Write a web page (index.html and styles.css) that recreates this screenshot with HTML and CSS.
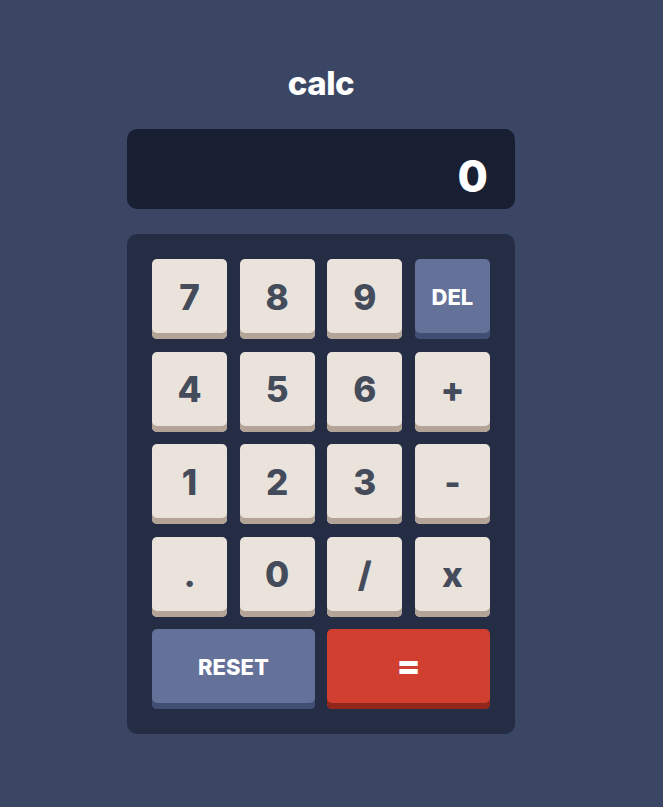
FILE: index.html
```html
<!DOCTYPE html>
<html lang="en">
<head>
<meta charset="utf-8">
<title>calc</title>
<link rel="stylesheet" href="styles.css">
</head>
<body>
<main class="calc">
  <h1 class="title">calc</h1>
  <div class="display"><span class="value">0</span></div>
  <div class="keypad">
    <button class="key">7</button>
    <button class="key">8</button>
    <button class="key">9</button>
    <button class="key key-alt key-word">DEL</button>
    <button class="key">4</button>
    <button class="key">5</button>
    <button class="key">6</button>
    <button class="key">+</button>
    <button class="key">1</button>
    <button class="key">2</button>
    <button class="key">3</button>
    <button class="key">-</button>
    <button class="key">.</button>
    <button class="key">0</button>
    <button class="key">/</button>
    <button class="key">x</button>
    <button class="key key-alt key-word key-wide">RESET</button>
    <button class="key key-eq key-word key-wide">=</button>
  </div>
</main>
</body>
</html>
```
FILE: styles.css
```css
* { box-sizing: border-box; }
html, body { margin: 0; padding: 0; }
body {
  background: #3b4664;
  font-family: "Inter", "Lato", sans-serif;
  font-weight: 800;
  min-height: 807px;
  padding-right: 21px;
}
.calc {
  width: 388px;
  margin: 0 auto;
  padding-top: 63px;
}
.title {
  margin: 0 0 26px;
  font-size: 33px;
  line-height: 40px;
  font-weight: 800;
  color: #ffffff;
  text-align: center;
  letter-spacing: -0.5px;
}
.display {
  height: 80px;
  border-radius: 10px;
  background: #181f33;
  display: flex;
  align-items: center;
  justify-content: flex-end;
  padding: 14px 27px 0 0;
  margin-bottom: 25px;
}
.value {
  color: #ffffff;
  font-size: 44px;
  line-height: 1;
  font-weight: 800;
}
.keypad {
  background: #242d44;
  border-radius: 10px;
  padding: 25px;
  display: grid;
  grid-template-columns: repeat(4, 1fr);
  grid-auto-rows: 80px;
  gap: 12.5px;
}
.key {
  border: none;
  border-radius: 5px;
  background: #eae3dc;
  box-shadow: inset 0 -6px 0 #b3a497;
  color: #444b5a;
  font-family: inherit;
  font-size: 35px;
  font-weight: 800;
  padding: 0 0 4px;
  display: flex;
  align-items: center;
  justify-content: center;
  line-height: 1;
}
.key-word {
  font-size: 22px;
  color: #ffffff;
}
.key-alt {
  background: #647198;
  box-shadow: inset 0 -6px 0 #414e73;
}
.key-eq {
  background: #d03f2f;
  box-shadow: inset 0 -6px 0 #93261a;
  font-size: 36px;
  padding-bottom: 8px;
}
.key-wide { grid-column: span 2; }
```
